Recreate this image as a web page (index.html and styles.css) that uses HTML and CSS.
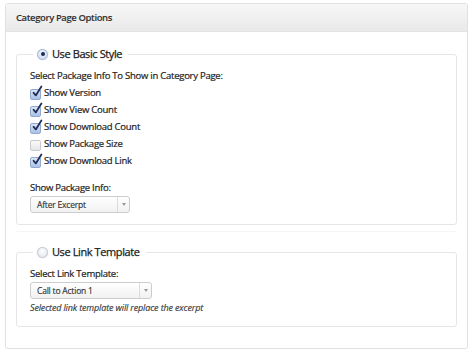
FILE: index.html
```html
<!DOCTYPE html>
<html>
<head>
<meta charset="utf-8">
<link rel="stylesheet" href="styles.css">
</head>
<body>
<div class="panel">
  <div class="panel-head">Category Page Options</div>
  <div class="panel-body">
    <fieldset class="group">
      <legend class="legend">
        <span class="radio checked"><span class="dot"></span></span>
        <span>Use Basic Style</span>
      </legend>
      <div class="line first">Select Package Info To Show in Category Page:</div>
      <div class="check-row"><span class="cb on"><svg viewBox="0 0 12 14" width="12" height="14"><path d="M2.6 8.8 L4.8 11.4 L10.4 2.4" fill="none" stroke="#1f2f5a" stroke-width="1.8" stroke-linecap="round" stroke-linejoin="round"/></svg></span>Show Version</div>
      <div class="check-row"><span class="cb on"><svg viewBox="0 0 12 14" width="12" height="14"><path d="M2.6 8.8 L4.8 11.4 L10.4 2.4" fill="none" stroke="#1f2f5a" stroke-width="1.8" stroke-linecap="round" stroke-linejoin="round"/></svg></span>Show View Count</div>
      <div class="check-row"><span class="cb on"><svg viewBox="0 0 12 14" width="12" height="14"><path d="M2.6 8.8 L4.8 11.4 L10.4 2.4" fill="none" stroke="#1f2f5a" stroke-width="1.8" stroke-linecap="round" stroke-linejoin="round"/></svg></span>Show Download Count</div>
      <div class="check-row"><span class="cb"></span>Show Package Size</div>
      <div class="check-row"><span class="cb on"><svg viewBox="0 0 12 14" width="12" height="14"><path d="M2.6 8.8 L4.8 11.4 L10.4 2.4" fill="none" stroke="#1f2f5a" stroke-width="1.8" stroke-linecap="round" stroke-linejoin="round"/></svg></span>Show Download Link</div>
      <div class="line label-gap">Show Package Info:</div>
      <div class="select w1"><span class="select-text">After Excerpt</span><span class="select-arrow"><span class="tri"></span></span></div>
    </fieldset>
    <div class="sep"></div>
    <fieldset class="group group2">
      <legend class="legend">
        <span class="radio"></span>
        <span>Use Link Template</span>
      </legend>
      <div class="line first">Select Link Template:</div>
      <div class="select w2"><span class="select-text">Call to Action 1</span><span class="select-arrow"><span class="tri"></span></span></div>
      <div class="note">Selected link template will replace the excerpt</div>
    </fieldset>
  </div>
</div>
</body>
</html>
```
FILE: styles.css
```css
html, body {
  margin: 0;
  padding: 0;
  background: #fff;
}
body {
  font-family: "Open Sans", "Liberation Sans", sans-serif;
  color: #222;
  font-size: 9.5px;
  letter-spacing: -0.25px;
  -webkit-text-stroke: 0.2px #222;
}
.panel {
  margin: 3px 6px 0 5px;
  border: 1px solid #e1e1e1;
  border-radius: 3px;
  height: 346px;
  box-sizing: border-box;
  box-shadow: 0 1px 1px rgba(0,0,0,0.04);
}
.panel-head {
  height: 27px;
  line-height: 28px;
  padding-left: 10px;
  font-size: 9.5px;
  letter-spacing: -0.4px;
  font-weight: 600;
  color: #333;
  -webkit-text-stroke: 0.1px #333;
  background: linear-gradient(#f7f7f7, #e9e9e9);
  border-bottom: 1px solid #e3e3e3;
  border-radius: 3px 3px 0 0;
}
.panel-body {
  padding: 13px 10px 0 10px;
}
.group {
  margin: 0;
  border: 1px solid #e6e6e6;
  border-radius: 3px;
  padding: 1px 12px 11px 13px;
  min-width: 0;
}
.legend {
  margin-left: 3px;
  padding: 0 6px 0 4px;
  font-size: 11px;
  letter-spacing: -0.4px;
  color: #1a1a1a;
  -webkit-text-stroke: 0.25px #1a1a1a;
  line-height: 18px;
  display: flex;
  align-items: center;
  gap: 4px;
}
.radio {
  width: 9px;
  height: 9px;
  border-radius: 50%;
  border: 1px solid #c3c7cf;
  background: radial-gradient(circle at 50% 35%, #ffffff, #dfe3ea);
  display: flex;
  align-items: center;
  justify-content: center;
  box-shadow: 0 0 1px rgba(120,140,180,0.5);
}
.radio.checked {
  border-color: #9fb4d6;
  background: radial-gradient(circle at 50% 35%, #f3f7ff, #c8d6ee);
}
.dot {
  width: 4px;
  height: 4px;
  border-radius: 50%;
  background: #1e2b4e;
}
.line {
  line-height: 17px;
}
.line.first {
  margin-top: 3px;
}
.check-row {
  display: flex;
  align-items: center;
  line-height: 17px;
  height: 17px;
}
.cb {
  width: 9px;
  height: 9px;
  border: 1px solid #c6c9cf;
  border-radius: 2px;
  background: linear-gradient(#fafafa, #e6e6e6);
  margin-right: 3px;
  margin-top: 4px;
  position: relative;
  flex: none;
}
.cb.on {
  border-color: #93a9cf;
  background: linear-gradient(#dce7f8, #a9c1e6);
}
.cb svg {
  position: absolute;
  left: 0;
  top: -6px;
}
.label-gap {
  margin-top: 10px;
}
.select {
  margin-top: 0;
  height: 17px;
  box-sizing: border-box;
  border: 1px solid #cdcdcd;
  border-radius: 3px;
  background: linear-gradient(#ffffff, #f1f1f1);
  display: flex;
  align-items: stretch;
  font-size: 8.5px;
  letter-spacing: -0.2px;
  color: #333;
  -webkit-text-stroke: 0.15px #333;
}
.w1 { width: 100px; }
.w2 { width: 122px; }
.select-text {
  flex: 1;
  padding-left: 6px;
  line-height: 15px;
}
.select-arrow {
  width: 11px;
  border-left: 1px solid #dcdcdc;
  display: flex;
  align-items: center;
  justify-content: center;
}
.tri {
  width: 0;
  height: 0;
  border-left: 2px solid transparent;
  border-right: 2px solid transparent;
  border-top: 3px solid #999;
}
.sep {
  margin: 6px 0 0 0;
  border-top: 1px solid #f5f5f5;
  height: 0;
}
.group2 {
  margin-top: 11px;
  padding-bottom: 10px;
}
.note {
  font-style: italic;
  line-height: 17px;
  color: #3a3a3a;
  -webkit-text-stroke: 0.15px #3a3a3a;
  font-size: 9px;
  letter-spacing: -0.15px;
}
```
